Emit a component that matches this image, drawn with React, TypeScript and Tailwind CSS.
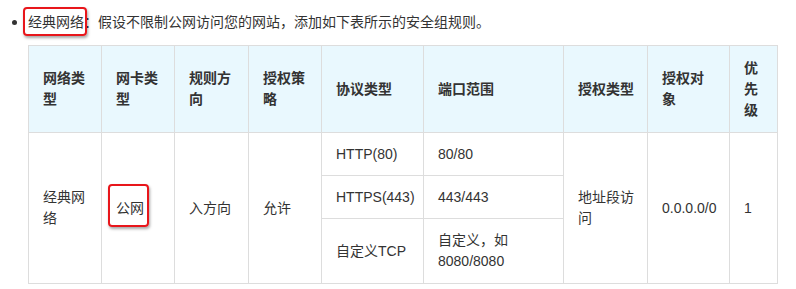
import React from "react";

const headers = ["网络类型", "网卡类型", "规则方向", "授权策略", "协议类型", "端口范围", "授权类型", "授权对象", "优先级"];
const widths = ["w-[73px]", "w-[73px]", "w-[74px]", "w-[73px]", "w-[102px]", "w-[140px]", "w-[84px]", "w-[82px]", "w-[48px]"];

const protocols = [
  { proto: "HTTP(80)", port: "80/80", h: "h-[43px]" },
  { proto: "HTTPS(443)", port: "443/443", h: "h-[43px]" },
  { proto: "自定义TCP", port: "自定义，如 8080/8080", h: "h-[65px]" },
];

const cell = "border border-[#dddddd] pl-[14px] pr-[13px] py-0 align-middle text-left";

function Marked({ children, className }: { children: React.ReactNode; className: string }) {
  return (
    <span className="relative inline-block">
      {children}
      <span className={`pointer-events-none absolute rounded-[4px] border-2 border-[#e8161b] shadow-[1px_2px_3px_rgba(0,0,0,0.35)] ${className}`} />
    </span>
  );
}

export default function App() {
  return (
    <div className="h-[289px] w-[796px] bg-white text-[14px] leading-[21px] text-[#333333] [font-family:'Liberation_Sans','Noto_Sans_CJK_SC',sans-serif]">
      <div className="flex items-center pl-[12px] pt-[12px]">
        <span className="mr-[11px] h-[5px] w-[5px] rounded-full bg-[#333333]" />
        <span>
          <Marked className="-left-[5px] -right-[3px] -top-[5px] -bottom-[3px]">经典网络</Marked>：假设不限制公网访问您的网站，添加如下表所示的安全组规则。
        </span>
      </div>

      <table className="ml-[28px] mt-[12px] w-[749px] table-fixed border-collapse">
        <thead>
          <tr className="h-[87px] bg-[#e9f8fe]">
            {headers.map((h, i) => (
              <th key={h} className={`${cell} ${widths[i]} font-bold`}>
                {h}
              </th>
            ))}
          </tr>
        </thead>
        <tbody>
          {protocols.map((p, i) => (
            <tr key={p.proto} className={p.h}>
              {i === 0 && (
                <>
                  <td rowSpan={3} className={cell}>经典网络</td>
                  <td rowSpan={3} className={cell}>
                    <Marked className="-left-[8px] -right-[5px] -top-[14px] -bottom-[8px]">公网</Marked>
                  </td>
                  <td rowSpan={3} className={cell}>入方向</td>
                  <td rowSpan={3} className={cell}>允许</td>
                </>
              )}
              <td className={cell}>{p.proto}</td>
              <td className={cell}>{p.port}</td>
              {i === 0 && (
                <>
                  <td rowSpan={3} className={cell}>地址段访问</td>
                  <td rowSpan={3} className={cell}>0.0.0.0/0</td>
                  <td rowSpan={3} className={cell}>1</td>
                </>
              )}
            </tr>
          ))}
        </tbody>
      </table>
    </div>
  );
}
